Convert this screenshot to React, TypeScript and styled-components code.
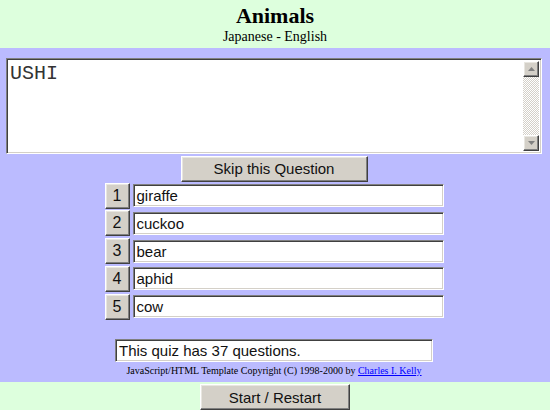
import React from "react";
import styled, { createGlobalStyle } from "styled-components";

const Global = createGlobalStyle`
  html, body { margin: 0; padding: 0; }
  body { background: #ddffdd; width: 550px; height: 410px; overflow: hidden; }
`;

const Page = styled.div`
  display: flex;
  flex-direction: column;
  width: 550px;
  height: 410px;
`;

const Header = styled.header`
  height: 48px;
  background: #ddffdd;
  display: flex;
  flex-direction: column;
  align-items: center;
  font-family: "Liberation Serif", serif;
  color: #000;
`;

const Title = styled.h1`
  margin: 3px 0 0;
  font-size: 22px;
  font-weight: bold;
  line-height: 26px;
`;

const Subtitle = styled.div`
  font-size: 14px;
  line-height: 16px;
`;

const Main = styled.main`
  height: 337px;
  box-sizing: border-box;
  background: #bbbbff;
  padding: 10px 8px 0 6px;
  display: flex;
  flex-direction: column;
  align-items: center;
`;

const inset = `
  box-sizing: border-box;
  border: 1px solid;
  border-color: #808080 #ffffff #ffffff #808080;
  box-shadow: inset 1px 1px 0 #404040, inset -1px -1px 0 #d4d0c8;
  background: #fff;
`;

const outset = `
  box-sizing: border-box;
  border: 1px solid;
  border-color: #ffffff #404040 #404040 #ffffff;
  box-shadow: inset -1px -1px 0 #808080, inset 1px 1px 0 #e8e6e0;
  background: #d4d0c8;
`;

const TextBox = styled.div`
  ${inset}
  align-self: stretch;
  height: 96px;
  display: flex;
  padding: 2px;
`;

const Question = styled.div`
  flex: 1;
  font-family: "Liberation Mono", "Courier New", monospace;
  font-size: 20px;
  line-height: 23px;
  color: #333;
  padding: 1px 1px;
`;

const ScrollBar = styled.div`
  width: 16px;
  display: flex;
  flex-direction: column;
`;

const ArrowBtn = styled.div`
  ${outset}
  width: 16px;
  height: 16px;
  display: flex;
  align-items: center;
  justify-content: center;
`;

const Track = styled.div`
  flex: 1;
  background-color: #ffffff;
  background-image: repeating-conic-gradient(#d4d0c8 0 25%, #ffffff 0 50%);
  background-size: 2px 2px;
`;

const Button = styled.button<{ $w: number }>`
  ${outset}
  width: ${(p) => p.$w}px;
  height: 26px;
  padding: 0;
  font-family: "Liberation Sans", Arial, sans-serif;
  font-size: 15px;
  color: #111;
  cursor: default;
`;

const SkipButton = styled(Button)`
  margin-top: 2px;
`;

const Choices = styled.div`
  margin-top: 1px;
  display: flex;
  flex-direction: column;
  gap: 1.75px;
`;

const Row = styled.div`
  display: flex;
  align-items: center;
  gap: 3px;
`;

const NumButton = styled(Button)`
  font-size: 16px;
`;

const Field = styled.div<{ $w: number }>`
  ${inset}
  width: ${(p) => p.$w}px;
  height: 23px;
  padding: 0 3px;
  display: flex;
  align-items: center;
  font-family: "Liberation Sans", Arial, sans-serif;
  font-size: 15px;
  color: #111;
  white-space: nowrap;
`;

const Status = styled(Field)`
  margin-top: 19px;
`;

const Copyright = styled.div`
  margin-top: 3px;
  font-family: "Liberation Serif", serif;
  font-size: 10px;
  line-height: 12px;
  color: #000;
  a { color: #0000ff; text-decoration: underline; }
`;

const Footer = styled.footer`
  flex: 1;
  background: #ddffdd;
  display: flex;
  justify-content: center;
  padding-top: 2px;
`;

const Arrow = ({ up }: { up?: boolean }) => (
  <svg width="7" height="4" viewBox="0 0 7 4">
    <polygon points={up ? "3.5,0 7,4 0,4" : "0,0 7,0 3.5,4"} fill="#808080" />
  </svg>
);

const answers = ["giraffe", "cuckoo", "bear", "aphid", "cow"];

export default function App() {
  return (
    <Page>
      <Global />
      <Header>
        <Title>Animals</Title>
        <Subtitle>Japanese - English</Subtitle>
      </Header>
      <Main>
        <TextBox>
          <Question>USHI</Question>
          <ScrollBar>
            <ArrowBtn><Arrow up /></ArrowBtn>
            <Track />
            <ArrowBtn><Arrow /></ArrowBtn>
          </ScrollBar>
        </TextBox>
        <SkipButton $w={187}>Skip this Question</SkipButton>
        <Choices>
          {answers.map((a, i) => (
            <Row key={a}>
              <NumButton $w={25}>{i + 1}</NumButton>
              <Field $w={311}>{a}</Field>
            </Row>
          ))}
        </Choices>
        <Status $w={318}>This quiz has 37 questions.</Status>
        <Copyright>
          JavaScript/HTML Template Copyright (C) 1998-2000 by <a href="#">Charles I. Kelly</a>
        </Copyright>
      </Main>
      <Footer>
        <Button $w={150}>Start / Restart</Button>
      </Footer>
    </Page>
  );
}
